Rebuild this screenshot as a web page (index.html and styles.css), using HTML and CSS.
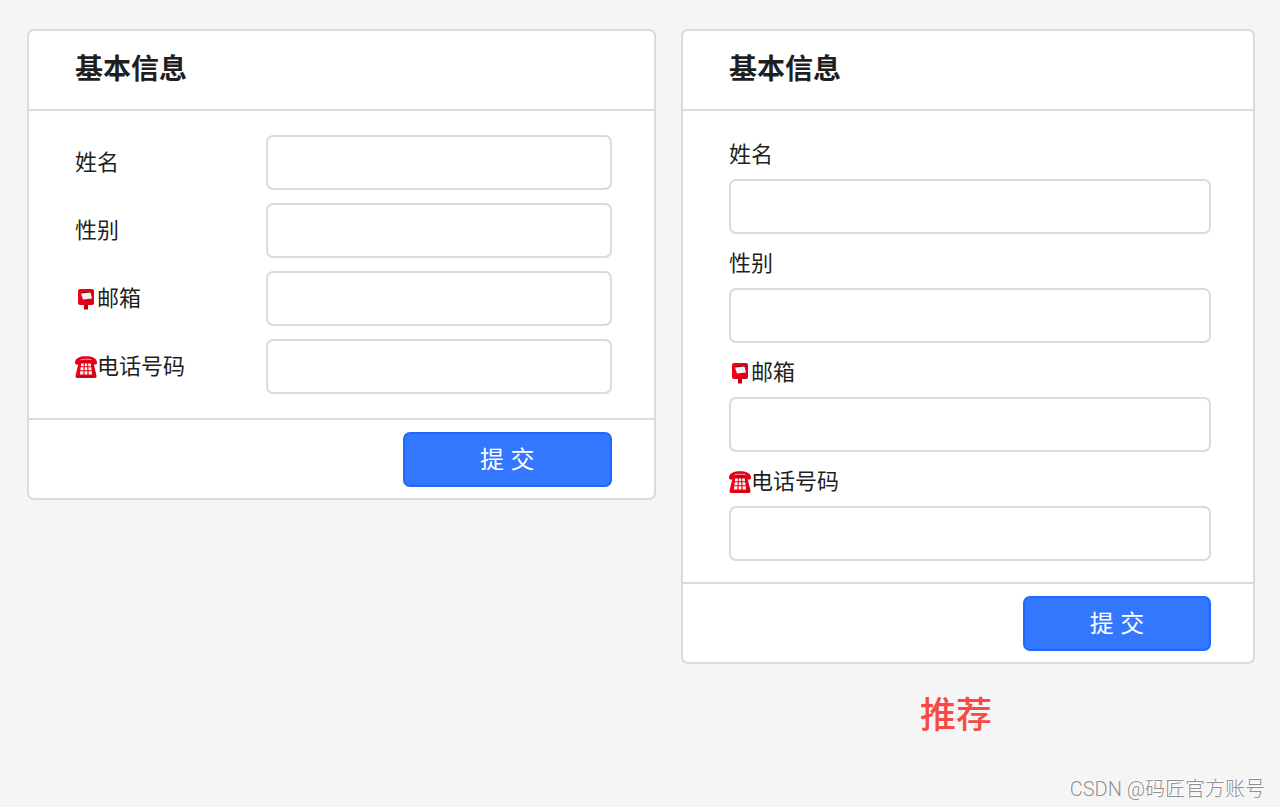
FILE: index.html
```html
<!DOCTYPE html>
<html lang="zh-CN">
<head>
<meta charset="utf-8">
<meta name="viewport" content="width=device-width, initial-scale=1">
<title>基本信息</title>
<link rel="stylesheet" href="styles.css">
</head>
<body>
<svg class="sprite" aria-hidden="true">
  <linearGradient id="red" x1="0" x2="1"><stop offset="0" stop-color="#f5001c"/><stop offset="1" stop-color="#d80016"/></linearGradient>
  <symbol id="postbox" viewBox="0 0 22 22">
    <path d="M9 15h4v6.500h-4z" fill="#b9000f"/>
    <rect x="3" y="1" width="16" height="16" rx="2" fill="url(#red)"/>
    <path d="M6 4h10v2H6z" fill="#8c000c"/>
    <path d="M6 5.500 15.500 4.500l1.500 6-9 1z" fill="#f4f4f6"/>
  </symbol>
  <symbol id="phone" viewBox="0 0 22 22">
    <path d="M4 5h14l3 12.500.5 2.500c.1 1.300-.4 2-1.800 2H2.300C.9 22 .4 21.300.5 20L1 17.500z" fill="url(#red)"/>
    <path d="M0 6C.5 2 5 .2 11 .2S21.500 2 22 6c.1 1.800-.5 2.500-2 2.500h-2c-1 0-1.500-.5-1.500-1.500V5.200h-11V7c0 1-.5 1.500-1.500 1.500H2C.5 8.500-.1 7.800 0 6z" fill="#e3001a"/>
    <path d="M5.500 3.800c3-.8 8-.8 11 0" fill="none" stroke="#ff9da2" stroke-width="1"/>
    <path d="M5.500 5.500h11" stroke="#a80012" stroke-width=".8"/>
    <path d="M6.200 7.500h2.600v2.700H5.900zM9.800 7.500h2.400v2.700H9.800zM13.200 7.500h2.600l.3 2.700h-2.900zM5.700 11.300h2.900v2.900H5.400zM9.700 11.300h2.600v2.900H9.700zM13.400 11.300h2.900l.3 2.900h-3.200zM5.200 15.300h3.200v3.200H4.900zM9.600 15.300h2.800v3.200H9.600zM13.600 15.300h3.200l.3 3.200h-3.500z" fill="#fff3f3"/>
    <path d="M1.500 20.500h19" stroke="#b50012" stroke-width="1"/>
  </symbol>
</svg>
<main class="forms">
  <form class="card card-inline">
    <header class="card-header"><h2 class="title">基本信息</h2></header>
    <div class="card-body">
      <div class="field"><label class="label" for="name-a">姓名</label><input class="input" id="name-a" type="text"></div>
      <div class="field"><label class="label" for="gender-a">性别</label><input class="input" id="gender-a" type="text"></div>
      <div class="field"><label class="label" for="mail-a"><svg class="icon" aria-hidden="true"><use href="#postbox"/></svg>邮箱</label><input class="input" id="mail-a" type="email"></div>
      <div class="field"><label class="label" for="phone-a"><svg class="icon" aria-hidden="true"><use href="#phone"/></svg>电话号码</label><input class="input" id="phone-a" type="tel"></div>
    </div>
    <footer class="card-footer"><button class="submit" type="button">提 交</button></footer>
  </form>
  <section class="recommended">
    <form class="card card-stacked">
      <header class="card-header"><h2 class="title">基本信息</h2></header>
      <div class="card-body">
        <div class="field"><label class="label" for="name-b">姓名</label><input class="input" id="name-b" type="text"></div>
        <div class="field"><label class="label" for="gender-b">性别</label><input class="input" id="gender-b" type="text"></div>
        <div class="field"><label class="label" for="mail-b"><svg class="icon" aria-hidden="true"><use href="#postbox"/></svg>邮箱</label><input class="input" id="mail-b" type="email"></div>
        <div class="field"><label class="label" for="phone-b"><svg class="icon" aria-hidden="true"><use href="#phone"/></svg>电话号码</label><input class="input" id="phone-b" type="tel"></div>
      </div>
      <footer class="card-footer"><button class="submit" type="button">提 交</button></footer>
    </form>
    <p class="caption">推荐</p>
  </section>
</main>
<p class="credit">CSDN @码匠官方账号</p>
</body>
</html>
```
FILE: styles.css
```css
* { box-sizing: border-box; }

body {
  margin: 0;
  min-height: 100vh;
  display: flex;
  flex-direction: column;
  background: #f5f5f5;
  color: #1f1f1f;
  font-family: "Liberation Sans", "Noto Sans CJK SC", sans-serif;
  font-size: 22px;
}

.sprite { position: absolute; width: 0; height: 0; }

.forms {
  display: grid;
  grid-template-columns: 629fr 574fr;
  gap: 25px;
  align-items: start;
  padding: 29px 25px 0 27px;
}

.card {
  background: #fff;
  border: 2px solid #d9dae2;
  border-radius: 7px;
}

.card-header {
  padding: 19px 46px;
  border-bottom: 2px solid #d9dae2;
}

.title {
  margin: 0;
  font-size: 28px;
  line-height: 40px;
  font-weight: 700;
}

.card-body {
  display: flex;
  flex-direction: column;
  padding: 24px 42px 24px 46px;
}

.card-inline .card-body { gap: 13px; }
.card-stacked .card-body { gap: 14px; padding-top: 28px; padding-bottom: 21px; }

.card-inline .field {
  display: grid;
  grid-template-columns: 191fr 346fr;
  align-items: center;
}

.card-stacked .field {
  display: flex;
  flex-direction: column;
  gap: 8px;
}

.label {
  display: flex;
  align-items: center;
  line-height: 32px;
}

.icon { width: 22px; height: 22px; }

.input {
  width: 100%;
  height: 55px;
  padding: 0 16px;
  border: 2px solid #d9dae2;
  border-radius: 7px;
  background: #fff;
  color: inherit;
  font: inherit;
}

.card-footer {
  display: flex;
  justify-content: flex-end;
  padding: 12px 42px 11px 46px;
  border-top: 2px solid #d9dae2;
}

.submit {
  width: 39%;
  height: 55px;
  padding: 0 0 4px;
  border: 2px solid #1f69ff;
  border-radius: 7px;
  background: #3377ff;
  color: #fff;
  font: inherit;
  font-size: 24px;
}

.caption {
  margin: 26px 24px 0 0;
  color: #fa4843;
  font-size: 36px;
  line-height: 52px;
  font-weight: 500;
  text-align: center;
}

.credit {
  margin: auto 15px 3px 0;
  color: #8f8f8f;
  font-family: Roboto, "Noto Sans CJK SC", sans-serif;
  font-size: 20px;
  font-weight: 300;
  line-height: 30px;
  text-align: right;
  text-shadow: -1px -1px 0 #fff;
}
```
